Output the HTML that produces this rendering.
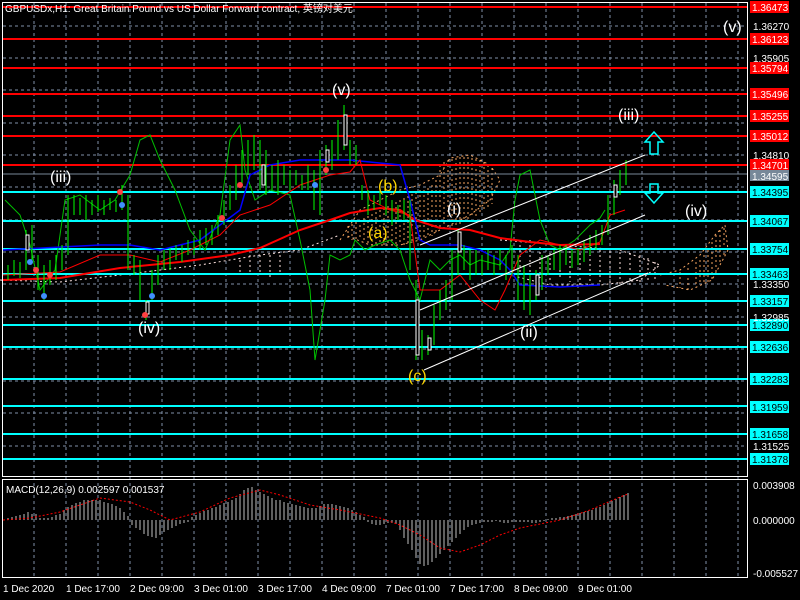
<!DOCTYPE html>
<html><head><style>
html,body{margin:0;padding:0;background:#000;width:800px;height:600px;overflow:hidden}
svg{display:block;font-family:"Liberation Sans",sans-serif}
</style></head><body>
<svg width="800" height="600" viewBox="0 0 800 600" xmlns="http://www.w3.org/2000/svg">
<rect width="800" height="600" fill="#000"/>
<g stroke="#8090a8" stroke-width="1" stroke-dasharray="3,3" shape-rendering="crispEdges">
<line x1="34" y1="3" x2="34" y2="576"/><line x1="66" y1="3" x2="66" y2="576"/><line x1="98" y1="3" x2="98" y2="576"/><line x1="130" y1="3" x2="130" y2="576"/><line x1="162" y1="3" x2="162" y2="576"/><line x1="194" y1="3" x2="194" y2="576"/><line x1="226" y1="3" x2="226" y2="576"/><line x1="258" y1="3" x2="258" y2="576"/><line x1="290" y1="3" x2="290" y2="576"/><line x1="322" y1="3" x2="322" y2="576"/><line x1="354" y1="3" x2="354" y2="576"/><line x1="386" y1="3" x2="386" y2="576"/><line x1="418" y1="3" x2="418" y2="576"/><line x1="450" y1="3" x2="450" y2="576"/><line x1="482" y1="3" x2="482" y2="576"/><line x1="514" y1="3" x2="514" y2="576"/><line x1="546" y1="3" x2="546" y2="576"/><line x1="578" y1="3" x2="578" y2="576"/><line x1="610" y1="3" x2="610" y2="576"/><line x1="642" y1="3" x2="642" y2="576"/><line x1="674" y1="3" x2="674" y2="576"/><line x1="706" y1="3" x2="706" y2="576"/><line x1="738" y1="3" x2="738" y2="576"/>
<line x1="3" y1="26" x2="746" y2="26"/><line x1="3" y1="58" x2="746" y2="58"/><line x1="3" y1="90" x2="746" y2="90"/><line x1="3" y1="123" x2="746" y2="123"/><line x1="3" y1="155" x2="746" y2="155"/><line x1="3" y1="187" x2="746" y2="187"/><line x1="3" y1="220" x2="746" y2="220"/><line x1="3" y1="252" x2="746" y2="252"/><line x1="3" y1="284" x2="746" y2="284"/><line x1="3" y1="317" x2="746" y2="317"/><line x1="3" y1="349" x2="746" y2="349"/><line x1="3" y1="381" x2="746" y2="381"/><line x1="3" y1="413" x2="746" y2="413"/><line x1="3" y1="446" x2="746" y2="446"/>
</g>
<!-- clouds -->
<g stroke="#f4a460" stroke-width="1" stroke-dasharray="2,3" fill="none">
<path d="M340 240 L360 210 L380 200 L400 190 L420 185 L440 175 L450 158 L470 155 L490 165 L500 180 L490 200 L470 215 L440 230 L420 240 L400 245 L370 245 L345 235"/>
<path d="M440 165 V230 M444 162 V230 M448 160 V228 M452 159 V228 M456 158 V226 M460 157 V224 M464 157 V222 M468 157 V220 M472 158 V218 M476 159 V216 M480 160 V214 M484 162 V212 M488 165 V208 M492 168 V204 M424 190 V240 M420 190 V240 M416 192 V242 M412 194 V244 M408 196 V245 M404 198 V245 M400 200 V245 M396 202 V245 M392 204 V245 M388 206 V245 M384 208 V245 M380 210 V245 M376 212 V245 M372 214 V245 M368 216 V245 M364 218 V242 M360 220 V240 M356 222 V240 M352 224 V240 M348 226 V238 M428 188 V238 M432 185 V236 M436 180 V234"/>
<path d="M660 275 L680 270 L700 255 L715 235 L725 225 L728 250 L712 280 L690 290 L665 285"/>
<path d="M680 272 V288 M688 268 V290 M696 262 V288 M700 260 V285 M704 255 V284 M708 250 V285 M712 242 V280 M716 235 V275 M720 230 V265 M724 228 V258"/>
</g>
<g stroke="#ffe4e1" stroke-width="1" stroke-dasharray="2,3" fill="none">
<path d="M0 280 L60 282 L120 275 L200 265 L260 255 L300 250 L340 235"/>
<path d="M240 260 V275 M250 255 V272 M260 255 V275 M270 255 V278 M280 255 V275 M520 240 V275 M530 240 V275 M540 242 V278 M550 243 V280 M560 245 V280 M570 246 V282 M580 248 V285 M590 249 V285 M600 250 V285 M610 251 V285 M620 252 V285 M630 253 V285 M640 255 V285 M648 258 V283 M655 262 V282"/>
<path d="M500 240 L560 245 L620 250 L660 265 L640 280 L600 285 L550 285 L510 275"/>
</g>
<!-- level lines -->
<g stroke="#ff0000" stroke-width="2">
<line x1="3" y1="7" x2="747" y2="7"/><line x1="3" y1="39" x2="747" y2="39"/><line x1="3" y1="68" x2="747" y2="68"/><line x1="3" y1="94" x2="747" y2="94"/><line x1="3" y1="116" x2="747" y2="116"/><line x1="3" y1="136" x2="747" y2="136"/><line x1="3" y1="165" x2="747" y2="165"/>
</g>
<line x1="3" y1="174" x2="747" y2="174" stroke="#778899"/>
<g stroke="#00ffff" stroke-width="2">
<line x1="3" y1="192" x2="747" y2="192"/><line x1="3" y1="221" x2="747" y2="221"/><line x1="3" y1="249" x2="747" y2="249"/><line x1="3" y1="274" x2="747" y2="274"/><line x1="3" y1="301" x2="747" y2="301"/><line x1="3" y1="325" x2="747" y2="325"/><line x1="3" y1="347" x2="747" y2="347"/><line x1="3" y1="379" x2="747" y2="379"/><line x1="3" y1="406" x2="747" y2="406"/><line x1="3" y1="434" x2="747" y2="434"/><line x1="3" y1="459" x2="747" y2="459"/>
</g>
<!-- lines -->
<polyline fill="none" stroke="#00c000" stroke-width="1" points="5,200 20,215 30,245 40,290 55,270 65,200 80,195 100,210 115,200 130,175 140,140 150,135 160,160 175,190 190,230 205,250 220,215 230,140 240,125 245,170 255,200 270,190 290,195 300,240 310,290 315,360 320,330 325,300 330,255 340,260 350,255 355,240 365,250 375,245 390,240 400,250 410,280 420,300 430,260 440,270 450,260 460,255 470,265 480,260 500,265 510,250 515,200 520,175 530,170 540,220 550,245 560,250 575,240 590,225 600,218 605,210"/>
<polyline fill="none" stroke="#ff0000" stroke-width="2" points="3,280 60,278 120,268 180,262 230,255 260,248 300,230 330,220 350,213 380,208 400,210 415,220 440,228 470,230 500,238 530,242 560,245 600,244"/>
<polyline fill="none" stroke="#0000ff" stroke-width="1.5" points="3,250 100,245 130,245 160,250 200,240 240,210 250,175 270,165 300,160 350,160 400,165 410,200 420,240 430,245 460,245 480,250 500,260 510,270 520,285 560,287 600,285"/>
<polyline fill="none" stroke="#ff0000" stroke-width="1" points="3,275 60,272 100,255 130,255 160,262 190,250 220,235 240,215 270,205 300,185 330,175 350,172 360,160 370,200 390,210 410,215 420,290 440,290 460,275 480,300 495,310 505,290 520,255 540,240 560,245 580,250 600,242 610,215 625,210"/>
<!-- candles -->
<g stroke="#00ff00" stroke-width="1">
<path d="M8 265V280 M14 260V276 M20 262V278 M26 230V270 M32 225V260 M38 255V290 M44 265V300 M50 260V285 M56 255V280 M62 245V270 M68 195V255 M74 195V215 M80 198V215 M86 195V220 M92 200V215 M98 195V212 M104 200V215 M110 198V210 M116 200V212 M122 185V210 M128 195V270 M134 255V275 M140 260V300 M146 300V320 M152 270V300 M158 255V285 M164 250V270 M170 248V270 M176 245V260 M182 245V262 M188 240V255 M194 238V255 M200 230V250 M206 228V245 M212 225V245 M218 215V235 M224 200V225 M230 185V210 M236 165V200 M242 150V185 M248 140V175 M254 135V170 M260 140V190 M266 150V195 M272 165V190 M278 160V195 M284 165V185 M290 170V190 M296 170V185 M302 175V190 M308 165V190 M314 170V210 M320 150V215 M326 145V175 M332 140V170 M338 120V160 M344 105V150 M350 140V165 M356 145V165 M362 185V200 M368 190V215 M374 195V210 M380 190V205 M386 195V215 M392 200V225 M398 205V220 M404 200V220 M410 200V270 M416 280V360 M422 330V360 M428 335V355 M434 305V345 M440 290V320 M446 280V310 M452 250V300 M458 230V275 M464 245V270 M470 250V280 M476 250V275 M482 255V275 M488 250V270 M494 255V275 M500 250V270 M506 255V280 M512 245V275 M518 255V300 M524 265V310 M530 275V315 M536 270V300 M542 255V290 M548 255V275 M554 250V270 M560 245V270 M566 245V265 M572 250V268 M578 248V265 M584 240V262 M590 235V255 M596 230V250 M602 225V245 M608 195V235 M614 180V215 M620 170V195 M626 160V185"/>
</g>
<g fill="#000" stroke="#fff" stroke-width="1">
<rect x="326" y="150" width="3" height="12"/><rect x="344" y="115" width="3" height="30"/><rect x="416" y="300" width="3" height="55"/><rect x="428" y="338" width="3" height="12"/><rect x="262" y="165" width="3" height="20"/><rect x="458" y="232" width="3" height="20"/><rect x="536" y="275" width="3" height="20"/><rect x="146" y="302" width="3" height="12"/><rect x="26" y="235" width="3" height="15"/><rect x="614" y="185" width="3" height="12"/>
</g>
<g fill="#ff4040"><circle cx="36" cy="270" r="3"/><circle cx="50" cy="275" r="3"/><circle cx="145" cy="315" r="3"/><circle cx="120" cy="192" r="3"/><circle cx="222" cy="218" r="3"/><circle cx="240" cy="185" r="3"/><circle cx="326" cy="170" r="3"/></g>
<g fill="#4090ff"><circle cx="30" cy="262" r="3"/><circle cx="44" cy="296" r="3"/><circle cx="152" cy="296" r="3"/><circle cx="122" cy="205" r="3"/><circle cx="315" cy="185" r="3"/></g>
<g stroke="#fff" stroke-width="1">
<line x1="420" y1="245" x2="645" y2="155"/><line x1="420" y1="310" x2="645" y2="215"/><line x1="424" y1="370" x2="648" y2="273"/>
</g>
<path d="M654 132 L663 142 L658 142 L658 154 L650 154 L650 142 L645 142 Z" fill="none" stroke="#00ffff" stroke-width="1.5"/>
<path d="M654 203 L663 193 L658 193 L658 184 L650 184 L650 193 L645 193 Z" fill="none" stroke="#00ffff" stroke-width="1.5"/>
<g fill="#fff" font-size="16">
<text x="723" y="32">(v)</text><text x="332" y="95">(v)</text><text x="618" y="120">(iii)</text><text x="50" y="182">(iii)</text><text x="685" y="216">(iv)</text><text x="138" y="333">(iv)</text><text x="447" y="214">(i)</text><text x="520" y="337">(ii)</text>
</g>
<g fill="#ffd700" font-size="16"><text x="378" y="191">(b)</text><text x="368" y="238">(a)</text><text x="408" y="381">(c)</text></g>
<text x="5" y="12" fill="#fff" font-size="10">GBPUSDx,H1:  Great Britain Pound vs US Dollar Forward contract, 英镑对美元</text>
<g shape-rendering="crispEdges">
<rect x="2.5" y="2.5" width="745" height="474" fill="none" stroke="#fff"/>
<rect x="2.5" y="479.5" width="745" height="98" fill="none" stroke="#fff"/>
</g>
<g font-size="10">
<g fill="#ff0000"><rect x="750" y="1" width="39" height="12"/><rect x="750" y="33" width="39" height="12"/><rect x="750" y="62" width="39" height="12"/><rect x="750" y="88" width="39" height="12"/><rect x="750" y="110" width="39" height="12"/><rect x="750" y="130" width="39" height="12"/><rect x="750" y="159" width="39" height="12"/></g>
<rect x="750" y="170" width="39" height="11" fill="#778899"/>
<g fill="#00ffff"><rect x="750" y="186" width="39" height="12"/><rect x="750" y="215" width="39" height="12"/><rect x="750" y="243" width="39" height="12"/><rect x="750" y="268" width="39" height="12"/><rect x="750" y="295" width="39" height="12"/><rect x="750" y="319" width="39" height="12"/><rect x="750" y="341" width="39" height="12"/><rect x="750" y="373" width="39" height="12"/><rect x="750" y="401" width="39" height="12"/><rect x="750" y="428" width="39" height="12"/><rect x="750" y="453" width="39" height="12"/></g>
<g fill="#fff"><text x="752" y="11">1.36473</text><text x="752" y="43">1.36123</text><text x="752" y="72">1.35794</text><text x="752" y="98">1.35496</text><text x="752" y="120">1.35255</text><text x="752" y="140">1.35012</text><text x="752" y="169">1.34701</text><text x="752" y="180">1.34595</text></g>
<g fill="#000"><text x="752" y="196">1.34395</text><text x="752" y="225">1.34067</text><text x="752" y="253">1.33754</text><text x="752" y="278">1.33463</text><text x="752" y="305">1.33157</text><text x="752" y="329">1.32890</text><text x="752" y="351">1.32636</text><text x="752" y="383">1.32283</text><text x="752" y="411">1.31959</text><text x="752" y="438">1.31658</text><text x="752" y="463">1.31378</text></g>
<g fill="#fff"><text x="753" y="30">1.36270</text><text x="753" y="62">1.35905</text><text x="753" y="159">1.34810</text><text x="753" y="288">1.33350</text><text x="753" y="321">1.32985</text><text x="753" y="450">1.31525</text><text x="753" y="489">0.003908</text><text x="753" y="524">0.000000</text><text x="753" y="577">-0.005527</text></g>
</g>
<text x="6" y="493" fill="#fff" font-size="10">MACD(12,26,9) 0.002597 0.001537</text>
<path stroke="#c0c0c0" stroke-width="1" d="M8 520v-2M12 520v-3M16 520v-4M20 520v-5M24 520v-6M28 520v-8M32 520v-6M36 520v-6M40 520v-2M44 520v-2M48 520v-2M52 520v-3M56 520v-5M60 520v-6M64 520v-10M68 520v-13M72 520v-15M76 520v-17M80 520v-18M84 520v-20M88 520v-20M92 520v-20M96 520v-20M100 520v-20M104 520v-18M108 520v-17M112 520v-16M116 520v-14M120 520v-12M124 520v-8M128 520v-4M132 520v5M136 520v8M140 520v10M144 520v14M148 520v16M152 520v17M156 520v18M160 520v15M164 520v12M168 520v10M172 520v8M176 520v6M180 520v4M184 520v3M188 520v2M192 520v-3M196 520v-5M200 520v-7M204 520v-9M208 520v-10M212 520v-12M216 520v-13M220 520v-15M224 520v-17M228 520v-18M232 520v-20M236 520v-22M240 520v-26M244 520v-30M248 520v-32M252 520v-33M256 520v-30M260 520v-28M264 520v-26M268 520v-24M272 520v-22M276 520v-20M280 520v-20M284 520v-18M288 520v-17M292 520v-16M296 520v-15M300 520v-14M304 520v-13M308 520v-12M312 520v-12M316 520v-12M320 520v-14M324 520v-16M328 520v-16M332 520v-16M336 520v-15M340 520v-14M344 520v-13M348 520v-12M352 520v-10M356 520v-8M360 520v-5M364 520v-3M368 520v2M372 520v4M376 520v5M380 520v5M384 520v4M388 520v3M392 520v3M396 520v4M400 520v10M404 520v18M408 520v24M412 520v30M416 520v38M420 520v44M424 520v46M428 520v45M432 520v42M436 520v38M440 520v34M444 520v30M448 520v26M452 520v22M456 520v18M460 520v14M464 520v10M468 520v7M472 520v5M476 520v4M480 520v3M484 520v2M488 520v2M492 520v2M496 520v1M500 520v2M504 520v3M508 520v3M512 520v2M516 520v2M520 520v2M524 520v2M528 520v2M532 520v3M536 520v3M540 520v2M544 520v1M548 520v-1M552 520v-2M556 520v-2M560 520v-3M564 520v-3M568 520v-4M572 520v-5M576 520v-6M580 520v-7M584 520v-8M588 520v-9M592 520v-10M596 520v-12M600 520v-13M604 520v-15M608 520v-17M612 520v-19M616 520v-21M620 520v-23M624 520v-25M628 520v-27"/>
<polyline fill="none" stroke="#ff0000" stroke-width="1" stroke-dasharray="2,2" points="3,520 30,518 60,512 100,498 130,502 150,510 170,520 200,512 230,498 260,490 280,495 310,505 340,510 380,518 400,525 420,535 440,548 460,552 480,545 500,535 520,528 560,520 590,510 620,497 628,494"/>
<g fill="#fff" font-size="10">
<text x="3" y="592">1 Dec 2020</text><text x="66" y="592">1 Dec 17:00</text><text x="130" y="592">2 Dec 09:00</text><text x="194" y="592">3 Dec 01:00</text><text x="258" y="592">3 Dec 17:00</text><text x="322" y="592">4 Dec 09:00</text><text x="386" y="592">7 Dec 01:00</text><text x="450" y="592">7 Dec 17:00</text><text x="514" y="592">8 Dec 09:00</text><text x="578" y="592">9 Dec 01:00</text></g>
</svg>
</body></html>
